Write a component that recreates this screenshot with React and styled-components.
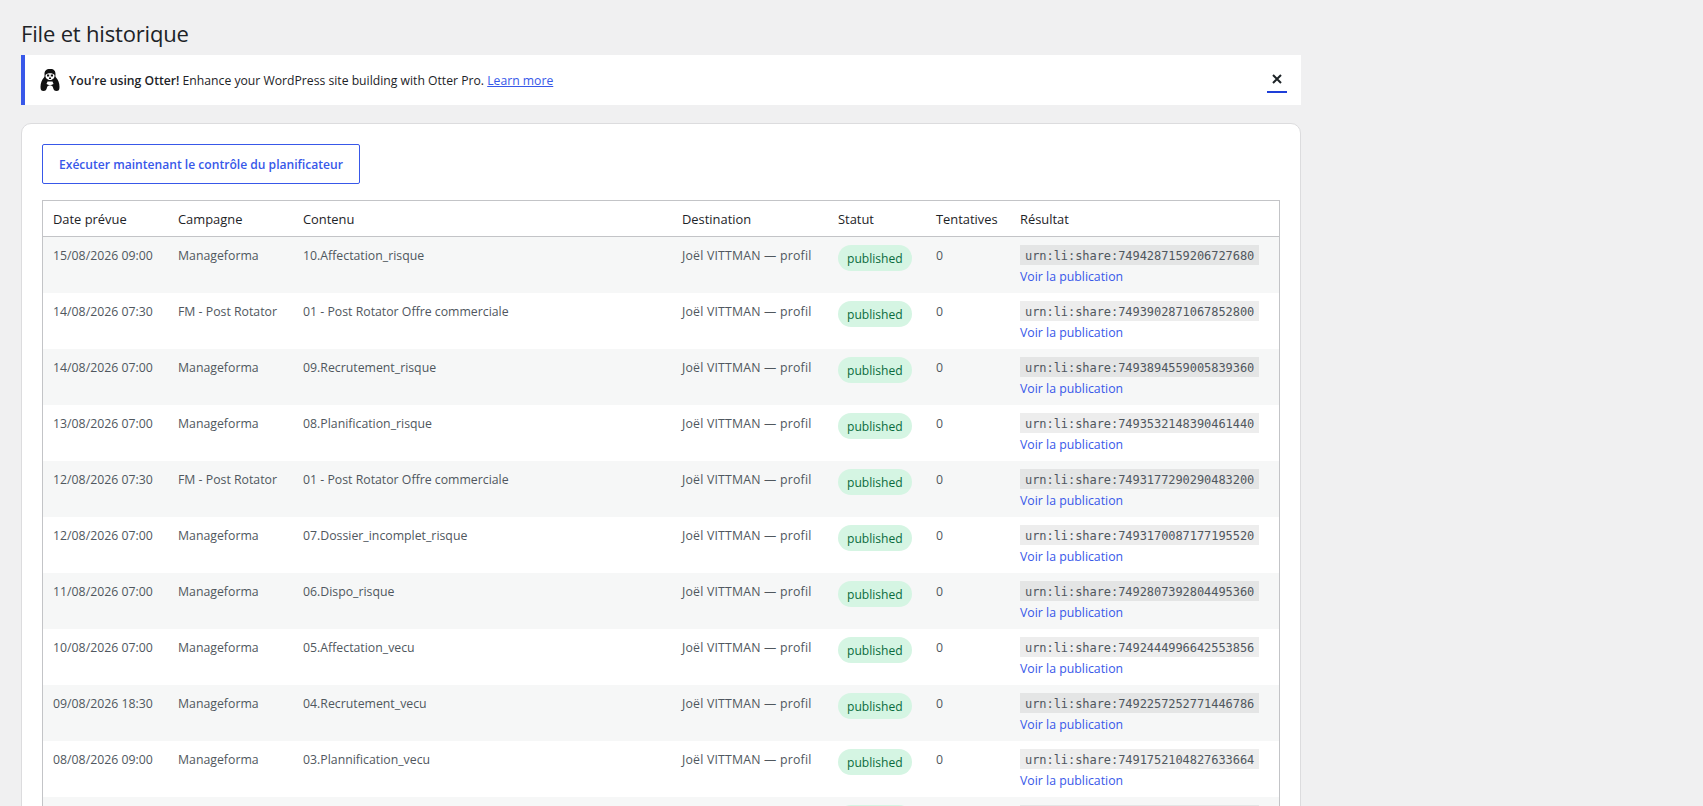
import React from 'react'
import styled, {createGlobalStyle} from 'styled-components'

const GlobalStyle = createGlobalStyle`
  html, body {
    margin: 0;
    height: 806px;
    overflow: hidden;
    background: #f0f0f1;
  }
  body {
    font-family: "Open Sans", "Noto Sans", sans-serif;
    font-size: 13px;
    color: #3c434a;
  }
`

const Page = styled.div`
  width: 1280px;
  padding: 0 0 0 21px;
`

const Title = styled.h1`
  margin: 0;
  padding: 18px 0 7px;
  height: 30px;
  font-size: 22px;
  line-height: 30px;
  letter-spacing: -0.18px;
  font-weight: 400;
  color: #1d2327;
`

const Notice = styled.div`
  display: flex;
  align-items: center;
  height: 50px;
  margin-bottom: 18px;
  padding-left: 15px;
  background: #fff;
  border-left: 4px solid #3858e9;
  color: #1d2327;
  font-size: 12.2px;
`

const NoticeText = styled.p`
  margin: 0 0 0 9px;
  flex: 1;
  strong {
    font-weight: 600;
  }
  a {
    color: #3858e9;
  }
`

const CloseButton = styled.button`
  display: flex;
  align-items: center;
  justify-content: center;
  width: 20px;
  height: 26px;
  margin-right: 14px;
  padding: 0;
  background: none;
  border: 0;
  border-bottom: 2px solid #1e3fd8;
`

const Card = styled.div`
  padding: 20px;
  background: #fff;
  border: 1px solid #dcdcde;
  border-radius: 10px;
`

const RunButton = styled.button`
  display: block;
  width: 318px;
  height: 40px;
  padding: 0;
  margin-bottom: 16px;
  background: #fff;
  border: 1px solid #3858e9;
  border-radius: 2px;
  color: #3858e9;
  font-family: inherit;
  font-size: 12.1px;
  font-weight: 600;
`

const Table = styled.table`
  width: 1238px;
  table-layout: fixed;
  border-collapse: separate;
  border-spacing: 0;
  border: 1px solid #c3c4c7;
`

const HeadCell = styled.th`
  height: 35px;
  padding: 0 10px;
  border-bottom: 1px solid #c3c4c7;
  text-align: left;
  font-weight: 400;
  font-size: 12.9px;
  color: #1d2327;
  white-space: nowrap;
`

const Row = styled.tr`
  background: ${({striped}) => striped ? '#f6f7f7' : '#fff'};
`

const Cell = styled.td`
  height: 56px;
  box-sizing: border-box;
  padding: 8px 10px 6px;
  vertical-align: top;
  line-height: 20px;
  font-size: 12.3px;
  white-space: nowrap;
  color: #50575e;
`

const CellText = styled.span`
  display: block;
  padding-top: 1px;
  letter-spacing: ${({wide}) => wide ? '0.2px' : '0'};
`

const Badge = styled.span`
  display: inline-block;
  min-width: 74px;
  box-sizing: border-box;
  height: 26px;
  line-height: 28px;
  padding: 0 9px;
  border-radius: 13px;
  background: #d5f5e3;
  color: #0a6b3d;
  font-size: 12.1px;
  vertical-align: top;
`

const Urn = styled.code`
  display: block;
  box-sizing: border-box;
  width: 239px;
  height: 20px;
  padding: 0 5px;
  background: rgba(0, 0, 0, 0.07);
  font-family: "DejaVu Sans Mono", "Liberation Mono", monospace;
  font-size: 12px;
  line-height: 22px;
  letter-spacing: -0.06px;
  color: #50575e;
`

const PublicationLink = styled.a`
  display: block;
  margin-top: 2px;
  color: #3858e9;
  text-decoration: none;
`

const OtterIcon = () => (
  <svg width="20" height="24" viewBox="0 0 20 24">
    <path fill="#111" d="M10 1C6 1 4.500 3 4.500 6c0 1.500.3 2.500-.5 3.500C2 11.500.5 15 .5 19c0 3 1 4 3 4s3-1 3.500-3.500c.2-1.500 1.500-2 3-2s2.800.5 3 2c.5 2.500 1.500 3.500 3.500 3.500s3-1 3-4c0-4-1.500-7.500-3.500-9.500-.8-1-.5-2-.5-3.500 0-3-1.500-5-5-5z" />
    <path fill="#fff" d="M5.500 7c1.500-2.500 7.500-2.500 9 0 .5 2.500-1.500 5-4.500 5S5 9.500 5.500 7z" />
    <path fill="#111" d="M7 6.500h2.200v2H7zM10.800 6.500H13v2h-2.200zM9 9.500h2V11H9z" />
    <path fill="#fff" d="M7.500 13.500h5l1 2.500-3.500 1.500L6.500 16z" />
  </svg>
)

const columns = [
  ['Date prévue', 125],
  ['Campagne', 125],
  ['Contenu', 379],
  ['Destination', 156],
  ['Statut', 98],
  ['Tentatives', 84],
  ['Résultat', 269],
]

const rows = [
  ['15/08/2026 09:00', 'Manageforma', '10.Affectation_risque', '7494287159206727680'],
  ['14/08/2026 07:30', 'FM - Post Rotator', '01 - Post Rotator Offre commerciale', '7493902871067852800'],
  ['14/08/2026 07:00', 'Manageforma', '09.Recrutement_risque', '7493894559005839360'],
  ['13/08/2026 07:00', 'Manageforma', '08.Planification_risque', '7493532148390461440'],
  ['12/08/2026 07:30', 'FM - Post Rotator', '01 - Post Rotator Offre commerciale', '7493177290290483200'],
  ['12/08/2026 07:00', 'Manageforma', '07.Dossier_incomplet_risque', '7493170087177195520'],
  ['11/08/2026 07:00', 'Manageforma', '06.Dispo_risque', '7492807392804495360'],
  ['10/08/2026 07:00', 'Manageforma', '05.Affectation_vecu', '7492444996642553856'],
  ['09/08/2026 18:30', 'Manageforma', '04.Recrutement_vecu', '7492257252771446786'],
  ['08/08/2026 09:00', 'Manageforma', '03.Plannification_vecu', '7491752104827633664'],
]

const App = () => (
  <Page>
    <GlobalStyle />
    <Title>File et historique</Title>
    <Notice>
      <OtterIcon />
      <NoticeText>
        <strong>You're using Otter!</strong> Enhance your WordPress site building with Otter Pro. <a href="#learn">Learn more</a>
      </NoticeText>
      <CloseButton aria-label="Fermer">
        <svg width="12" height="12" viewBox="0 0 12 12">
          <path d="M2 2l8 8M10 2l-8 8" stroke="#1d2327" strokeWidth="2" />
        </svg>
      </CloseButton>
    </Notice>
    <Card>
      <RunButton>Exécuter maintenant le contrôle du planificateur</RunButton>
      <Table>
        <colgroup>
          {columns.map(([label, width]) => <col key={label} width={width} />)}
        </colgroup>
        <thead>
          <tr>
            {columns.map(([label]) => <HeadCell key={label}>{label}</HeadCell>)}
          </tr>
        </thead>
        <tbody>
          {rows.map(([date, campaign, content, urn], index) => (
            <Row key={urn} striped={index % 2 === 0}>
              <Cell><CellText>{date}</CellText></Cell>
              <Cell><CellText>{campaign}</CellText></Cell>
              <Cell><CellText>{content}</CellText></Cell>
              <Cell><CellText wide>Joël VITTMAN — profil</CellText></Cell>
              <Cell><Badge>published</Badge></Cell>
              <Cell><CellText>0</CellText></Cell>
              <Cell>
                <Urn>urn:li:share:{urn}</Urn>
                <PublicationLink href="#post">Voir la publication</PublicationLink>
              </Cell>
            </Row>
          ))}
          {/* next row is below the fold, only its first pixels show */}
          <Row striped>
            <Cell colSpan={4} />
            <Cell><Badge /></Cell>
            <Cell />
            <Cell><Urn /></Cell>
          </Row>
        </tbody>
      </Table>
    </Card>
  </Page>
)

export default App
